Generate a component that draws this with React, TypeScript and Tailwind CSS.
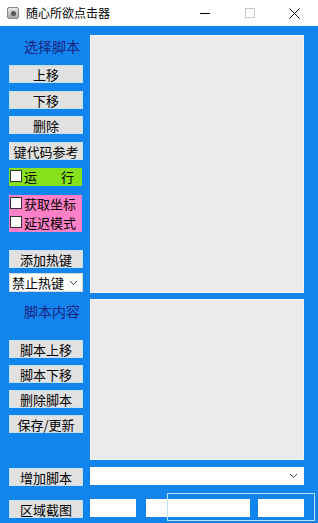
import React from 'react';

const font = { fontFamily: '"Noto Sans CJK SC", "Microsoft YaHei", sans-serif' };

const Btn = ({ label, className = '' }: { label: string; className?: string }) => (
    <div className={`ml-[9px] w-[74px] h-[18px] flex items-center justify-center bg-[#e1e1e1] border border-[#c3e2f7] text-[13px] leading-none text-black ${className}`}>
        {label}
    </div>
);

const Check = () => (
    <span className="inline-block w-[12px] h-[12px] bg-white border border-[#333] shrink-0" />
);

const Chevron = () => (
    <svg width="9" height="6" viewBox="0 0 9 6" className="shrink-0">
        <path d="M1 1 L4.5 4.5 L8 1" fill="none" stroke="#444" strokeWidth="1" />
    </svg>
);

export default function App() {
    return (
        <div className="w-[318px] h-[523px] bg-[#1284ee] overflow-hidden select-none" style={font}>
            {/* title bar */}
            <div className="h-[26px] bg-white flex items-center">
                <div className="ml-[7px] w-[12px] h-[12px] rounded-[2px] bg-gradient-to-b from-[#e8e8e8] to-[#a8a8a8] border border-[#888] flex items-center justify-center">
                    <span className="w-[5px] h-[5px] rounded-full bg-[#555]" />
                </div>
                <span className="ml-[7px] text-[12px] text-black">随心所欲点击器</span>
                <div className="ml-auto flex items-center">
                    <div className="w-[45px] flex justify-center">
                        <span className="w-[10px] h-px bg-black" />
                    </div>
                    <div className="w-[45px] flex justify-center">
                        <span className="w-[10px] h-[10px] border border-[#c8c8c8]" />
                    </div>
                    <div className="w-[45px] flex justify-center mr-[1px]">
                        <svg width="11" height="11" viewBox="0 0 11 11">
                            <path d="M0.5 0.5 L10.5 10.5 M10.5 0.5 L0.5 10.5" stroke="#111" strokeWidth="1" />
                        </svg>
                    </div>
                </div>
            </div>

            {/* top area */}
            <div className="flex">
                <div className="w-[90px] flex flex-col">
                    <div className="mt-[11px] h-[18px] pl-[24px] text-[14px] leading-[18px] text-[#1a2580]">选择脚本</div>
                    <Btn label="上移" className="mt-[10px]" />
                    <Btn label="下移" className="mt-[8px]" />
                    <Btn label="删除" className="mt-[7px]" />
                    <Btn label="键代码参考" className="mt-[8px]" />
                    <div className="mt-[8px] ml-[9px] w-[73px] h-[18px] bg-[#86e01c] flex items-center text-[13px] text-black">
                        <span className="ml-[1px]"><Check /></span>
                        <span className="ml-[2px]">运</span>
                        <span className="ml-[24px]">行</span>
                    </div>
                    <div className="mt-[9px] ml-[9px] w-[73px] h-[37px] bg-[#ff80c6] flex flex-col justify-center gap-[3px] text-[13px] leading-[16px] text-black">
                        <div className="flex items-center">
                            <span className="ml-[1px]"><Check /></span>
                            <span className="ml-[2px]">获取坐标</span>
                        </div>
                        <div className="flex items-center">
                            <span className="ml-[1px]"><Check /></span>
                            <span className="ml-[2px]">延迟模式</span>
                        </div>
                    </div>
                    <Btn label="添加热键" className="mt-[18px]" />
                    <div className="mt-[5px] ml-[9px] w-[74px] h-[19px] bg-white border border-[#d6d6d6] flex items-center justify-between pl-[2px] pr-[4px] text-[13px] text-black">
                        <span>禁止热键</span>
                        <Chevron />
                    </div>
                    <div className="mt-[10px] h-[18px] pl-[24px] text-[14px] leading-[18px] text-[#1a2580]">脚本内容</div>
                    <Btn label="脚本上移" className="mt-[20px]" />
                    <Btn label="脚本下移" className="mt-[7px]" />
                    <Btn label="删除脚本" className="mt-[7px]" />
                    <Btn label="保存/更新" className="mt-[7px]" />
                </div>
                <div className="flex flex-col pt-[9px]">
                    <div className="w-[214px] h-[258px] bg-[#ebebeb] border border-[#f4f4f4]" />
                    <div className="mt-[6px] w-[214px] h-[161px] bg-[#ebebeb] border border-[#f4f4f4]" />
                </div>
            </div>

            {/* 增加脚本 row */}
            <div className="mt-[7px] flex items-start">
                <div className="w-[90px]">
                    <Btn label="增加脚本" className="mt-px" />
                </div>
                <div className="w-[214px] h-[18px] bg-white flex items-center justify-end pr-[6px]">
                    <Chevron />
                </div>
            </div>

            {/* 区域截图 row */}
            <div className="relative mt-[13px] flex items-start">
                <div className="w-[90px]">
                    <Btn label="区域截图" className="mt-px" />
                </div>
                <div className="w-[46px] h-[18px] bg-white" />
                <div className="ml-[10px] w-[104px] h-[18px] bg-white" />
                <div className="ml-[8px] w-[46px] h-[18px] bg-white" />
                <div className="absolute left-[167px] top-[-6px] w-[148px] h-[28px] border border-[#bfe3fb]" />
            </div>
        </div>
    );
}
